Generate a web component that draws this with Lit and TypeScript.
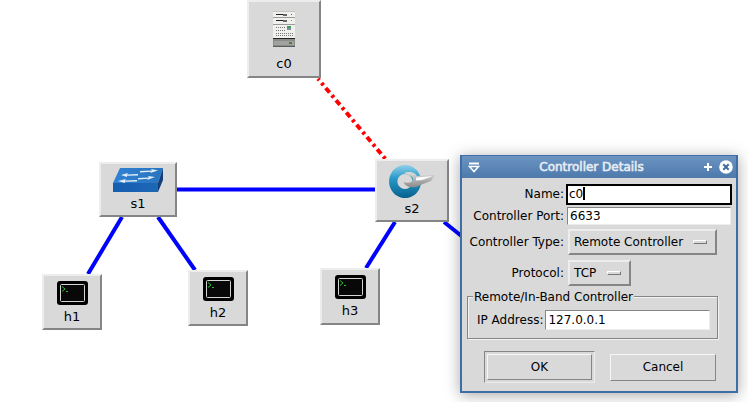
import { LitElement, html, css, svg } from "lit";
import { customElement } from "lit/decorators.js";

const serverIcon = svg`<svg width="22" height="36" viewBox="0 0 22 36">
  <rect x="0" y="0" width="22" height="36" fill="#f0f0ec"/>
  <rect x="0" y="0" width="22" height="1" fill="#c4c4c4"/>
  <rect x="0" y="6" width="22" height="1" fill="#9a9a9a"/>
  <rect x="0" y="13" width="22" height="1" fill="#9a9a9a"/>
  <rect x="3" y="3" width="10" height="1" fill="#222"/><rect x="10" y="3" width="4" height="2" fill="#666"/>
  <rect x="3" y="9" width="10" height="1" fill="#222"/><rect x="10" y="9" width="4" height="2" fill="#666"/>
  <rect x="18" y="3" width="1" height="1" fill="#d33"/><rect x="18" y="9" width="1" height="1" fill="#5cc23a"/>
  <path d="M3 16h1v1h-1zM5 16h1v1h-1zM7 16h1v1h-1zM9 16h1v1h-1zM11 16h1v1h-1zM3 19h1v1h-1zM5 19h1v1h-1zM7 19h1v1h-1zM9 19h1v1h-1zM11 19h1v1h-1zM3 22h1v1h-1zM5 22h1v1h-1zM7 22h1v1h-1zM9 22h1v1h-1zM11 22h1v1h-1zM13 22h1v1h-1zM15 22h1v1h-1zM17 22h1v1h-1zM19 22h1v1h-1zM3 24h1v1h-1zM5 24h1v1h-1zM7 24h1v1h-1zM9 24h1v1h-1zM11 24h1v1h-1zM13 24h1v1h-1zM15 24h1v1h-1zM17 24h1v1h-1zM19 24h1v1h-1z" fill="#777"/>
  <rect x="14" y="15" width="4" height="2" fill="#3f9a63"/><rect x="14" y="17" width="4" height="2" fill="#7f8f9a"/>
  <rect x="0" y="27" width="22" height="1.500" fill="#222"/>
  <rect x="0" y="28.500" width="22" height="7.500" fill="#8a8c8b"/>
  <rect x="1" y="30" width="20" height="4" fill="#a0a2a0"/>
  <rect x="16" y="31" width="3" height="2" fill="#5d7a3c"/>
  <rect x="0" y="35" width="22" height="1" fill="#5c5c5c"/>
</svg>`;

const switchIcon = svg`<svg width="50" height="24" viewBox="0 0 50 24">
  <defs><linearGradient id="sw" x1="0" y1="0" x2="1" y2="0"><stop offset="0" stop-color="#2f82d2"/><stop offset="1" stop-color="#2a74bf"/></linearGradient>
  <linearGradient id="swf" x1="0" y1="0" x2="1" y2="0"><stop offset="0" stop-color="#155db0"/><stop offset="1" stop-color="#1d68b5"/></linearGradient></defs>
  <path d="M7 0H50L45 15H0Z" fill="url(#sw)"/>
  <path d="M0 15H45V24H0Z" fill="url(#swf)"/>
  <path d="M45 15L50 0V12L45 24Z" fill="#123f7c"/>
  <path d="M27 3L39 2.500L38 1L45 2.500L37 5L38 3.800L27 4.500Z M25 6L14 6.500L15 5L8 7L14 9L14 7.800L25 7.500Z M25 10L36 9.500L35 8L42 9L34 12L35 10.800L25 11.500Z M24 12L12 12.500L13 11L5 13L12 15L12 13.800L24 13.500Z" fill="#e3edf6"/>
</svg>`;

const controllerIcon = svg`<svg width="46" height="36" viewBox="0 0 46 36">
  <defs><linearGradient id="rg" x1="0" y1="0" x2="0" y2="1"><stop offset="0" stop-color="#8ed0ea"/><stop offset="0.4" stop-color="#2a9ac8"/><stop offset="1" stop-color="#07608f"/></linearGradient>
  <linearGradient id="kg" x1="0" y1="0" x2="0" y2="1"><stop offset="0" stop-color="#dedede"/><stop offset="1" stop-color="#8a8a8a"/></linearGradient></defs>
  <path fill-rule="evenodd" d="M16 0a16 16.500 0 1 0 0.100 0ZM16 9a7.500 7.500 0 1 1 -0.100 0Z" fill="url(#rg)"/>
  <path d="M15 8C20 6 26 7 28 11L46 10L42 16L34 19L27 22C21 23 15 21 15 17C19 19 24 17 24 14C24 11 19 10 15 8Z" fill="url(#kg)"/>
  <path d="M27 12.500L44 11L33 15L27 15.500Z" fill="#fbfbfb"/>
  <path d="M29 17L40 15.500L33 18L28 19.500Z" fill="#a0a0a0"/>
</svg>`;

const termIcon = svg`<svg width="31" height="24" viewBox="0 0 31 24">
  <rect x="0" y="0" width="31" height="24" rx="3" fill="#000"/>
  <rect x="3.500" y="3.500" width="24" height="17" rx="1" fill="#080808" stroke="#d4d4d4" stroke-width="1"/>
  <path d="M5 5.500L8 8L5 10.500M9 10.500H11" fill="none" stroke="#27c227" stroke-width="1"/>
</svg>`;

const shadeIcon = svg`<svg width="12" height="11" viewBox="0 0 12 11"><path d="M1 1.500H11" stroke="#fff" stroke-width="2"/><path d="M1.500 4.500H10.500L6 9.500Z" fill="none" stroke="#fff" stroke-width="1.600"/></svg>`;
const plusIcon = svg`<svg width="10" height="10" viewBox="0 0 10 10"><path d="M5 1V9M1 5H9" stroke="#fff" stroke-width="2"/></svg>`;
const closeIcon = svg`<svg width="14" height="14" viewBox="0 0 14 14"><circle cx="7" cy="7" r="6.800" fill="#fff"/><path d="M4.300 4.300L9.700 9.700M9.700 4.300L4.300 9.700" stroke="#3f6c9e" stroke-width="2"/></svg>`;

const nodes = [
  { label: "c0", x: 247, y: 0, w: 74, h: 78, icon: serverIcon, top: 11, gap: 10 },
  { label: "s1", x: 99, y: 162, w: 78, h: 55, icon: switchIcon, top: 6, gap: 5 },
  { label: "s2", x: 375, y: 159, w: 74, h: 63, icon: controllerIcon, top: 6, gap: 1 },
  { label: "h1", x: 42, y: 274, w: 60, h: 56, icon: termIcon, top: 7, gap: 5 },
  { label: "h2", x: 188, y: 270, w: 60, h: 56, icon: termIcon, top: 7, gap: 5 },
  { label: "h3", x: 320, y: 268, w: 60, h: 57, icon: termIcon, top: 7, gap: 5 },
];

@customElement("app-root")
export class AppRoot extends LitElement {
  static styles = css`
    :host { display: block; position: relative; width: 748px; height: 402px; overflow: hidden; background: #fff;
      font-family: "DejaVu Sans", sans-serif; font-size: 12px; color: #000; }
    .links { position: absolute; left: 0; top: 0; }
    .node { position: absolute; box-sizing: border-box; background: #d9d9d9;
      border: 2px solid; border-color: #ededed #858585 #858585 #ededed;
      display: flex; flex-direction: column; align-items: center; font-size: 13px; }
    .node svg { display: block; flex: none; }
    .node span { line-height: 14px; }
    .dialog { position: absolute; left: 460px; top: 155px; width: 278px; height: 238px; box-sizing: border-box;
      background: #d9d9d9; border: 1px solid #3f6ea6; border-width: 1px 2px 2px 2px;
      box-shadow: 0 2px 14px rgba(0,0,0,.35); display: flex; flex-direction: column; }
    .title { height: 22px; flex: none; display: flex; align-items: center; padding: 0 3px 0 6px;
      background: linear-gradient(#6b94c2, #4d79ab); color: #e6ecf3; font-size: 12px; -webkit-text-stroke: 0.6px #e6ecf3; }
    .title .t { flex: 1; text-align: center; }
    .title svg { display: block; }
    .title .plus { margin-right: 6px; }
    .body { display: grid; grid-template-columns: 100px 1fr; grid-template-rows: 22px 21px 32px 30px; column-gap: 2px;
      align-items: center; padding: 5px 4px 0 2px; }
    .lab { text-align: right; }
    .entry { box-sizing: border-box; background: #fff; height: 18px; line-height: 16px; padding-left: 2px; margin: 0 1px;
      border: 1px solid; border-color: #858585 #ededed #ededed #858585; }
    .entry.focus { height: 21px; line-height: 17px; border: 2px solid #000; padding-left: 1px; margin: 0; }
    .caret { display: inline-block; width: 2px; height: 13px; background: #000; vertical-align: -2px; }
    .menu { box-sizing: border-box; justify-self: start; height: 26px; margin-left: 2px; padding: 0 8px 0 4px;
      background: #d9d9d9; border: 2px solid; border-color: #ededed #858585 #858585 #ededed;
      display: flex; align-items: center; justify-content: space-between; }
    .menu.type { width: 149px; }
    .menu.proto { width: 63px; }
    .ind { width: 14px; height: 4px; box-sizing: border-box; background: #d9d9d9; border: 1px solid; border-color: #fff #777 #777 #fff; }
    .group { position: relative; box-sizing: border-box; margin: 8px 18px 0 5px; height: 43px;
      border: 1px solid #858585; box-shadow: 1px 1px 0 #f2f2f2, inset 1px 1px 0 #f2f2f2;
      display: flex; align-items: center; padding: 5px 7px 0 9px; gap: 2px; }
    .legend { position: absolute; left: 5px; top: -7px; background: #d9d9d9; padding: 0 1px; line-height: 14px; }
    .group .entry { flex: 1; height: 20px; margin: 0; line-height: 19px; }
    .buttons { display: flex; justify-content: space-between; align-items: center; margin: 12px 20px 0 22px; }
    .ok { box-sizing: border-box; width: 111px; height: 32px; padding: 2px; border: 1px solid; border-color: #858585 #ededed #ededed #858585; }
    .ok div, .cancel { box-sizing: border-box; display: flex; align-items: center; justify-content: center;
      background: #d9d9d9; border: 1px solid; border-color: #f6f6f6 #858585 #858585 #f6f6f6; }
    .ok div { height: 100%; }
    .cancel { width: 106px; height: 27px; }
  `;

  render() {
    return html`
      <svg class="links" width="748" height="402">
        <g stroke="#0000ff" stroke-width="4" fill="none">
          <path d="M176 189.500H376"/>
          <path d="M122 217L88 274"/>
          <path d="M158 217L195 270"/>
          <path d="M395 222L366 268"/>
          <path d="M444 222L464 238"/>
        </g>
        <path d="M318 78.800L393 168" stroke="#ff0000" stroke-width="4" fill="none" stroke-dasharray="6 3.500 3 3.500" stroke-dashoffset="4"/>
      </svg>
      ${nodes.map(
        (n) => html`<div class="node" style="left:${n.x}px;top:${n.y}px;width:${n.w}px;height:${n.h}px;padding-top:${n.top - 2}px;gap:${n.gap}px">
          ${n.icon}<span>${n.label}</span>
        </div>`
      )}
      <div class="dialog">
        <div class="title">${shadeIcon}<span class="t">Controller Details</span><span class="plus">${plusIcon}</span>${closeIcon}</div>
        <div class="body">
          <div class="lab">Name:</div><div class="entry focus">c0<span class="caret"></span></div>
          <div class="lab">Controller Port:</div><div class="entry">6633</div>
          <div class="lab">Controller Type:</div><div class="menu type"><span>Remote Controller</span><span class="ind"></span></div>
          <div class="lab">Protocol:</div><div class="menu proto"><span>TCP</span><span class="ind"></span></div>
        </div>
        <div class="group">
          <span class="legend">Remote/In-Band Controller</span>
          <span>IP Address:</span><div class="entry">127.0.0.1</div>
        </div>
        <div class="buttons">
          <div class="ok"><div>OK</div></div>
          <div class="cancel">Cancel</div>
        </div>
      </div>
    `;
  }
}
